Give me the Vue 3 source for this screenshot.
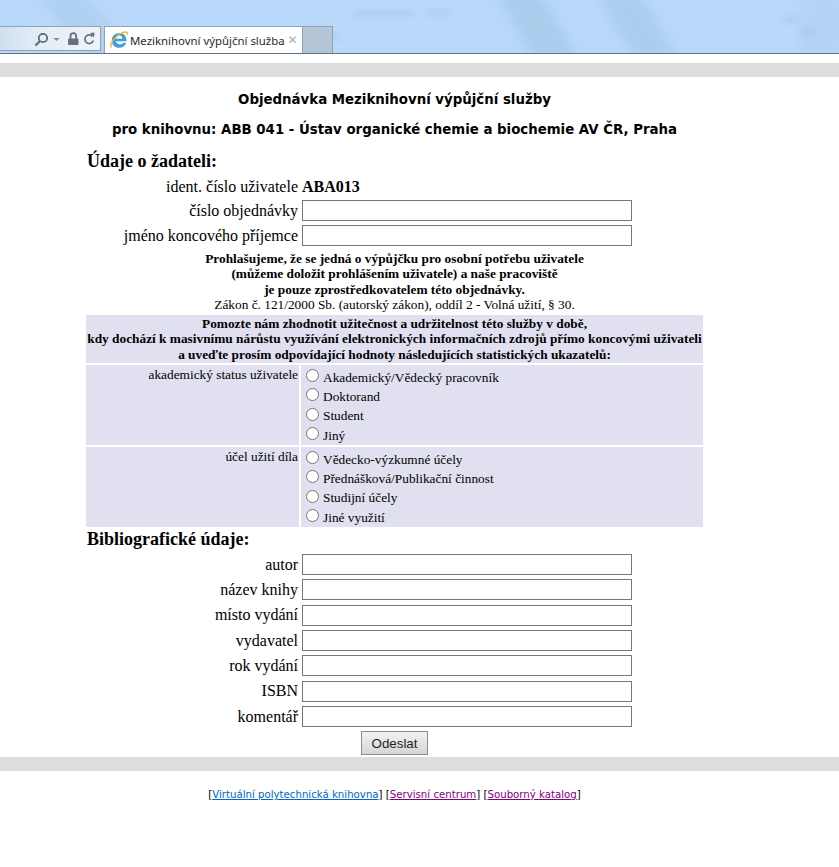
<template>
  <div class="page">
    <header class="chrome">
      <div class="blur blur-a"></div>
      <div class="blur blur-b"></div>
      <div class="blur blur-c"></div>
      <div class="blur blur-d"></div>
      <div class="smudge smudge-a"></div>
      <div class="smudge smudge-b"></div>
      <div class="smudge smudge-c"></div>
      <div class="smudge smudge-d"></div>
      <div class="smudge smudge-e"></div>
      <div class="addressbar">
        <svg class="tools" width="100" height="23" viewBox="0 0 100 23">
          <!-- coordinates start at x=0 of the page -->
          <circle cx="43" cy="11" r="4.200" fill="none" stroke="#5b6b7b" stroke-width="1.800" />
          <path d="M40 14 L35.500 18.500" stroke="#5b6b7b" stroke-width="2.200" fill="none" />
          <path d="M53.500 11 h6 l-3 3 z" fill="#7d8a97" />
          <path d="M70.500 12 V9 a2.800 2.800 0 0 1 5.600 0 V12" fill="none" stroke="#66737f" stroke-width="1.800" />
          <rect x="68" y="11.500" width="10.500" height="6.500" rx="1" fill="#66737f" />
          <path d="M92.500 9.500 a4.300 4.300 0 1 0 0.800 4" fill="none" stroke="#66737f" stroke-width="1.700" />
          <path d="M90 6 l4.500 -0.500 l-0.500 5 z" fill="#66737f" />
        </svg>
      </div>
      <div class="tab">
        <svg class="ie" width="18" height="18" viewBox="0 0 18 18">
          <path d="M1.800 9.500 C1.800 4.800 5.500 2 9.500 2 C14 2 16.500 5.200 16.500 10.300 H6 C6.500 13.800 11.200 14.200 13.600 11.700 H16.200 C14.800 15.500 11.800 16.800 9 16.800 C4.800 16.800 1.800 13.800 1.800 9.500 Z M6 7.700 H12.400 C12.200 5.500 10.900 4.600 9.200 4.600 C7.400 4.600 6.200 5.700 6 7.700 Z" fill="#3d9fdc" fill-rule="evenodd" />
          <path d="M1.300 16.500 C-1 12.500 6 4.500 12 1.800 C15.500 0.300 18 0.800 17.200 3.800" fill="none" stroke="#f2b632" stroke-width="1.400" />
        </svg>
        <span class="tab-title">Meziknihovní výpůjční služba</span>
        <span class="tab-close">✕</span>
      </div>
      <div class="newtab"></div>
    </header>

    <div class="band top-band"></div>

    <main class="content">
      <h2 class="title">Objednávka Meziknihovní výpůjční služby</h2>
      <h2 class="title second">pro knihovnu: ABB 041 - Ústav organické chemie a biochemie AV ČR, Praha</h2>

      <form class="order" @submit.prevent>
        <h3 class="section">Údaje o žadateli:</h3>
        <div class="row ident">
          <span class="label">ident. číslo uživatele</span>
          <b class="ident-value">ABA013</b>
        </div>
        <div v-for="f in orderFields" :key="f" class="row">
          <label class="label">{{ f }}</label>
          <input class="field" type="text" />
        </div>

        <div class="declare">
          <b>Prohlašujeme, že se jedná o výpůjčku pro osobní potřebu uživatele<br />
          (můžeme doložit prohlášením uživatele) a naše pracoviště<br />
          je pouze zprostředkovatelem této objednávky.</b><br />
          Zákon č. 121/2000 Sb. (autorský zákon), oddíl 2 - Volná užití, § 30.
        </div>

        <div class="stats">
          <div class="stats-head">
            <b>Pomozte nám zhodnotit užitečnost a udržitelnost této služby v době,<br />
            kdy dochází k masivnímu nárůstu využívání elektronických informačních zdrojů přímo koncovými uživateli<br />
            a uveďte prosím odpovídající hodnoty následujících statistických ukazatelů:</b>
          </div>
          <template v-for="g in radioGroups" :key="g.name">
            <div class="stats-label">{{ g.label }}</div>
            <div class="stats-options">
              <label v-for="o in g.options" :key="o" class="option">
                <span class="radio"></span><span class="option-text">{{ o }}</span>
              </label>
            </div>
          </template>
        </div>

        <h3 class="section biblio">Bibliografické údaje:</h3>
        <div v-for="f in biblioFields" :key="f" class="row biblio-row">
          <label class="label">{{ f }}</label>
          <input class="field" type="text" />
        </div>
        <div class="submit-row">
          <button class="submit" type="submit">Odeslat</button>
        </div>
      </form>
    </main>

    <div class="band bottom-band"></div>

    <footer class="links">
      [<a class="link" href="#">Virtuální polytechnická knihovna</a>]
      [<a class="link visited" href="#">Servisní centrum</a>]
      [<a class="link visited" href="#">Souborný katalog</a>]
    </footer>
  </div>
</template>

<script setup>
const orderFields = ['číslo objednávky', 'jméno koncového příjemce']
const biblioFields = ['autor', 'název knihy', 'místo vydání', 'vydavatel', 'rok vydání', 'ISBN', 'komentář']

const radioGroups = [
  {
    name: 'status',
    label: 'akademický status uživatele',
    options: ['Akademický/Vědecký pracovník', 'Doktorand', 'Student', 'Jiný']
  },
  {
    name: 'ucel',
    label: 'účel užití díla',
    options: ['Vědecko-výzkumné účely', 'Přednášková/Publikační činnost', 'Studijní účely', 'Jiné využití']
  }
]
</script>

<style>
html, body {
  background: #fff;
}
</style>

<style scoped>
.page {
  width: 839px;
  height: 867px;
  overflow: hidden;
  background: #fff;
  font-family: "Liberation Serif", "Times New Roman", serif;
  color: #000;
}

.chrome {
  position: relative;
  height: 53px;
  background: #b9d9fb;
  border-bottom: 1px solid #5f7286;
  overflow: hidden;
}
.blur {
  position: absolute;
  top: -10px;
  height: 73px;
  background: #a9cbea;
  filter: blur(8px);
}
.blur-a { left: 62px; width: 50px; transform: skewX(40deg); opacity: 0.6; }
.blur-b { left: 515px; width: 45px; transform: skewX(30deg); opacity: 0.9; }
.blur-c { left: 615px; width: 45px; transform: skewX(30deg); opacity: 0.8; }
.blur-d { left: 800px; width: 50px; opacity: 0.4; }
.smudge {
  position: absolute;
  background: #9dbcd9;
  filter: blur(3px);
  opacity: 0.55;
}
.smudge-a { left: 354px; top: 11px; width: 58px; height: 5px; }
.smudge-b { left: 426px; top: 11px; width: 26px; height: 4px; }
.smudge-c { left: 783px; top: 17px; width: 16px; height: 5px; }
.smudge-d { left: 800px; top: 30px; width: 16px; height: 5px; }
.smudge-e { left: 333px; top: 34px; width: 6px; height: 6px; }

.addressbar {
  position: absolute;
  left: 0;
  top: 26px;
  width: 100px;
  height: 23px;
  box-sizing: content-box;
  background: linear-gradient(90deg, #cfe0f0, #e4edf6 40%, #eef3f8);
  border: 1px solid #8ea3b8;
  border-left: 0;
}
.tools {
  display: block;
}

.tab {
  position: absolute;
  left: 104px;
  top: 26px;
  width: 199px;
  height: 27px;
  background: #fff;
  border: 1px solid #8ea3b8;
  border-bottom: 0;
  box-sizing: border-box;
  display: flex;
  align-items: center;
  color: #2b2b2b;
}
.ie {
  margin-left: 5px;
  flex: none;
}
.tab-title {
  margin-left: 2px;
  white-space: nowrap;
  font-family: "Noto Sans", sans-serif;
  font-size: 11.400px;
}
.tab-close {
  margin-left: 3px;
  font-size: 12px;
  font-weight: bold;
  color: #a3adb5;
  font-family: "DejaVu Sans", sans-serif;
}
.newtab {
  position: absolute;
  left: 303px;
  top: 26px;
  width: 30px;
  height: 27px;
  box-sizing: border-box;
  background: #b4c5d6;
  border: 1px solid #8ea3b8;
  border-left: 0;
  border-bottom: 0;
}

.band {
  height: 14px;
  background: #dedede;
}
.top-band {
  margin-top: 9px;
}

.content {
  height: 680px;
}

.title {
  margin: 0;
  width: 789px;
  padding-top: 15px;
  height: 18px;
  line-height: 15px;
  font-family: "DejaVu Sans", Verdana, sans-serif;
  font-size: 13.330px;
  font-weight: bold;
  text-align: center;
  color: #000;
}
.title.second {
  padding-top: 12px;
  height: 17px;
}

.order {
  width: 617px;
  margin-left: 86px;
}

.section {
  margin: 0;
  padding: 11px 0 0 1px;
  height: 23px;
  line-height: 23px;
  font-size: 18px;
  font-weight: bold;
}

.row {
  display: flex;
  align-items: center;
  height: 25px;
  font-size: 16px;
}
.row .label {
  width: 212px;
  text-align: right;
  white-space: nowrap;
}
.row.ident {
  box-sizing: border-box;
  padding-top: 2px;
}
.row.ident .ident-value {
  margin-left: 4px;
}
.field {
  margin: 0 0 0 4px;
  width: 330px;
  height: 21px;
  box-sizing: border-box;
  padding: 1px 2px;
  border: 1px solid #767676;
  background: #fff;
  border-radius: 0;
  outline: none;
}

.declare {
  padding-top: 3px;
  font-size: 13.330px;
  line-height: 15.330px;
  text-align: center;
  height: 64px;
}

.stats {
  display: grid;
  grid-template-columns: 213px 402px;
  column-gap: 2px;
  row-gap: 2px;
  width: 617px;
  font-size: 13.330px;
}
.stats-head {
  grid-column: 1 / 3;
  background: #e0e0f0;
  padding-top: 1px;
  height: 48px;
  box-sizing: border-box;
  line-height: 15.330px;
  text-align: center;
  white-space: nowrap;
}
.stats-label {
  background: #e0e0f0;
  text-align: right;
  padding: 2px 1px 0 0;
  line-height: 15px;
}
.stats-options {
  background: #e0e0f0;
  height: 80px;
  padding-top: 2px;
  box-sizing: border-box;
}
.option {
  display: flex;
  height: 19.300px;
  align-items: center;
}
.radio {
  width: 13px;
  height: 13px;
  margin: 0 4px 0 5px;
  box-sizing: border-box;
  border: 1px solid #767676;
  border-radius: 50%;
  background: #fff;
  flex: none;
  position: relative;
  top: -1px;
}
.option-text {
  position: relative;
  top: 1px;
  white-space: nowrap;
}

.section.biblio {
  padding-top: 0;
  height: 25px;
  line-height: 25px;
}
.biblio-row {
  height: 25.330px;
}

.submit-row {
  padding: 2px 0 0 275px;
}
.submit {
  display: block;
  width: 67px;
  height: 24px;
  padding: 0;
  font-family: "Liberation Sans", Arial, sans-serif;
  font-size: 13.330px;
  color: #1e1e1e;
  background: linear-gradient(#f2f2f2, #e3e3e3 50%, #d6d6d6);
  border: 1px solid #8b8b8b;
}

.links {
  width: 789px;
  margin-top: 16px;
  font-family: "DejaVu Sans", Verdana, sans-serif;
  font-size: 10.200px;
  line-height: 16px;
  text-align: center;
  color: #000;
}
.link {
  color: #0066cc;
  text-decoration: underline;
}
.link.visited {
  color: #800080;
}
</style>
